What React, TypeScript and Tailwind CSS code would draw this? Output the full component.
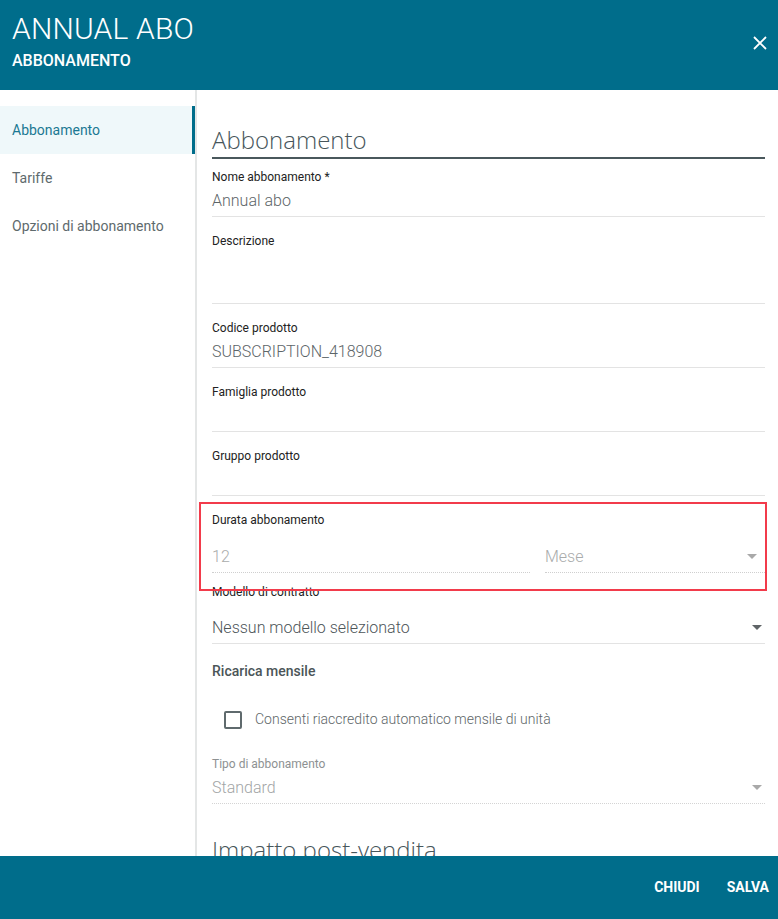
import {ReactNode} from "react";

const font = {fontFamily: "Roboto, 'Liberation Sans', sans-serif"};

function Caret({muted = false}: {muted?: boolean}) {
    return <svg width="10" height="5" viewBox="0 0 10 5" className={muted ? "fill-[#a9a9a9]" : "fill-[#5f6467]"}>
        <path d="M0 0h10L5 5z"/>
    </svg>
}

function Label({children, muted = false}: {children: ReactNode, muted?: boolean}) {
    return <div className={`text-[12px] leading-4 ${muted ? "text-[#8d9192]" : "text-[#222]"}`}>{children}</div>
}

function TextField({label, value, tall = false}: {label: string, value?: string, tall?: boolean}) {
    return <div className="mt-4 first:mt-0">
        <Label>{label}</Label>
        <div
            className={`flex items-center border-b border-[#e3e3e3] text-[16px] font-light text-[#5d6568] ${tall ? "h-[55px]" : "h-8"}`}>
            {value}
        </div>
    </div>
}

function SectionTitle({children}: {children: ReactNode}) {
    return <h2 className="text-[24px] font-light leading-8 text-[#47565b]"
               style={{fontFamily: "'Open Sans', 'Noto Sans', sans-serif"}}>{children}</h2>
}

const navItems = ["Abbonamento", "Tariffe", "Opzioni di abbonamento"];

export default function App() {
    return <div className="flex h-[919px] flex-col overflow-hidden bg-white" style={font}>
        <header className="relative h-[90px] shrink-0 bg-[#006d8b] px-3 text-white">
            <h1 className="pt-[11px] text-[30px] font-light leading-9 tracking-[0.2px]">ANNUAL ABO</h1>
            <div className="mt-[4px] text-[16px] font-medium leading-5">ABBONAMENTO</div>
            <button className="absolute right-[9px] top-[34px] p-0.5">
                <svg width="14" height="14" viewBox="0 0 14 14" className="stroke-white" strokeWidth="1.8">
                    <path d="M1 1l12 12M13 1L1 13"/>
                </svg>
            </button>
        </header>

        <div className="flex min-h-0 flex-1">
            <nav className="w-[197px] shrink-0 border-r-2 border-[#e4e6e6] pt-4">
                {navItems.map((item, i) => (
                    <div key={item}
                         className={`flex h-12 items-center px-3 text-[14px] ${i === 0 ? "border-r-[3px] border-[#006d8b] bg-[#eff8fa] text-[#1b7893]" : "text-[#5e6a6d]"}`}>
                        {item}
                    </div>
                ))}
            </nav>

            <main className="min-w-0 flex-1 pl-[15px] pr-[13px] pt-[34px]">
                <div className="border-b-2 border-[#4a585c] pb-[1px]">
                    <SectionTitle>Abbonamento</SectionTitle>
                </div>

                <div className="pt-[10px]">
                    <TextField label="Nome abbonamento *" value="Annual abo"/>
                    <TextField label="Descrizione" tall/>
                    <TextField label="Codice prodotto" value="SUBSCRIPTION_418908"/>
                    <TextField label="Famiglia prodotto"/>
                    <TextField label="Gruppo prodotto"/>

                    {/* durata: numero + unità */}
                    <div className="relative mt-4">
                        <div className="pointer-events-none absolute -left-[13px] -right-[2px] -top-[10px] bottom-[-18px] border-2 border-[#f23b4b]"/>
                        <Label>Durata abbonamento</Label>
                        <div className="mt-[13px] flex gap-[15px]">
                            <div
                                className="flex h-8 flex-1 items-center border-b border-dotted border-[#cfcfcf] text-[16px] font-light text-[#a9abab]">12
                            </div>
                            <div
                                className="flex h-8 w-[220px] items-center justify-between border-b border-dotted border-[#cfcfcf] pr-2 text-[16px] font-light text-[#a9abab]">
                                Mese<Caret muted/>
                            </div>
                        </div>
                    </div>

                    <div className="mt-[11px]">
                        <Label>Modello di contratto</Label>
                        <div
                            className="mt-[12px] flex h-8 items-center justify-between border-b border-[#e3e3e3] pr-[3px] text-[16px] font-light text-[#4d5558]">
                            Nessun modello selezionato<Caret/>
                        </div>
                    </div>

                    <div className="mt-[17px] text-[14px] font-medium leading-5 text-[#4b5558]">Ricarica mensile</div>

                    <label className="mt-[28px] flex items-center gap-[13px] pl-3">
                        <span className="h-[18px] w-[18px] rounded-[2px] border-2 border-[#5f6a6d]"/>
                        <span className="text-[14px] font-light text-[#5e6668]">Consenti riaccredito automatico mensile di unità</span>
                    </label>

                    <div className="mt-[26px]">
                        <Label muted>Tipo di abbonamento</Label>
                        <div
                            className="flex h-8 items-center justify-between border-b border-dotted border-[#d4d4d4] pr-[3px] text-[16px] font-light text-[#a2a5a6]">
                            Standard<Caret muted/>
                        </div>
                    </div>

                    <div className="mt-[30px]">
                        <SectionTitle>Impatto post-vendita</SectionTitle>
                    </div>
                </div>
            </main>
        </div>

        <footer className="flex h-[63px] shrink-0 items-center justify-end gap-[27px] bg-[#006d8b] pr-[9px] text-[14px] font-bold text-white">
            <button>CHIUDI</button>
            <button>SALVA</button>
        </footer>
    </div>
}
